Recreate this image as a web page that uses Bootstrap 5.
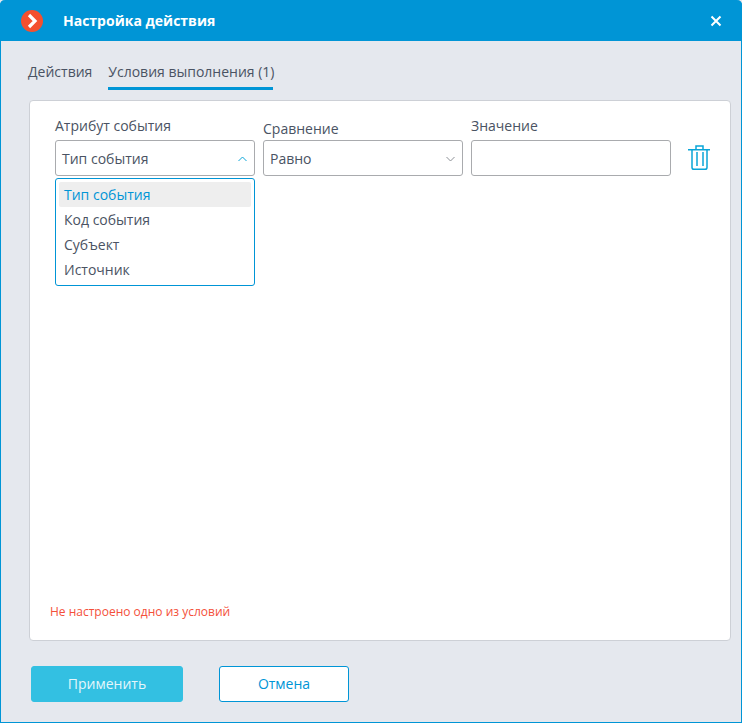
<!DOCTYPE html>
<html lang="ru"><head><meta charset="utf-8"><title>Настройка действия</title>
<link href="https://cdn.jsdelivr.net/npm/bootstrap@5.3.0/dist/css/bootstrap.min.css" rel="stylesheet">
<style>
html,body{margin:0;height:723px;overflow:hidden;background:#e5e8ee}
body{font-family:"Open Sans","Noto Sans",sans-serif;font-size:14px;color:#4a5363}
.win{width:742px;height:723px;background:#e5e8ee;border:1px solid #0095d6;border-top:0;border-radius:5px 5px 0 0}
.win-head{height:41px;margin:0 -1px;background:#0095d6;color:#fff;border-radius:5px 5px 0 0;padding:0 20px 0 21px}
.win-title{font-size:14px;font-weight:700;margin-left:20px}
.x-btn{width:12px;height:12px;margin-right:0}
.tabbar{margin:21px 0 0 27px;height:28px;gap:16px}
.tabitem{height:28px;line-height:19px;color:#4a5363;text-decoration:none}
.tabon{border-bottom:3px solid #0095d6;width:165px;white-space:nowrap}
.panel{margin:10px 0 0 28px;width:702px;height:541px;background:#fff;border:1px solid #cdd0d6;border-radius:4px;position:relative;padding:15px 25px 0}
.fld{width:200px;flex:none}
.fld-label{height:24px;line-height:19px;color:#4a5363}
.fld-low{padding-top:3px}
.selbox{height:36px;border:1px solid #a9abae;border-radius:3px;padding:2px 7px 0 6px;background:#fff;line-height:32px;color:#4a5363}
.fldgap{gap:8px}
.listpop{position:absolute;left:25px;top:77px;width:200px;height:108px;border:1px solid #0095d6;border-radius:3px;background:#fff;padding:3px;z-index:2}
.listitem{height:25px;line-height:25px;padding-left:5px;color:#4a5363}
.listsel{background:#eeeeee;border-radius:2px;color:#0095d6}
.trash{margin:29px 0 0 9px;width:22px;height:26px;flex:none}
.errmsg{position:absolute;left:20px;top:502px;font-size:12px;line-height:18px;color:#f4503a}
.footbar{margin:25px 0 0 30px;gap:36px}
.btn-ok,.btn-no{height:36px;font-size:14px;padding:0 0 2px;border-radius:3px;font-family:inherit}
.btn-ok{width:152px;background:#33c0e2;border:1px solid #33c0e2;color:#e4f6fb}
.btn-no{width:130px;background:#fff;border:1px solid #0095d6;color:#0095d6}
</style></head><body>
<div class="win">
  <div class="win-head d-flex align-items-center">
    <svg width="22" height="22" viewBox="0 0 22 22"><circle cx="11" cy="11" r="11" fill="#f4502f"/><path d="M8 5 14 11 8 17" fill="none" stroke="#fff" stroke-width="3.2"/></svg>
    <div class="win-title flex-grow-1">Настройка действия</div>
    <svg class="x-btn" viewBox="0 0 12 12"><path d="M1.5 1.5 10.5 10.5M10.5 1.5 1.5 10.5" stroke="#fff" stroke-width="2"/></svg>
  </div>
  <div class="tabbar d-flex">
    <a class="tabitem" href="#">Действия</a>
    <a class="tabitem tabon" href="#">Условия выполнения (1)</a>
  </div>
  <div class="panel">
    <div class="d-flex fldgap">
      <div class="fld">
        <div class="fld-label">Атрибут события</div>
        <div class="selbox d-flex justify-content-between align-items-center">Тип события
          <svg width="9" height="6" viewBox="0 0 9 6"><path d="M.5 5 4.5 1 8.5 5" fill="none" stroke="#0aa5d8" stroke-width="1"/></svg></div>
      </div>
      <div class="fld">
        <div class="fld-label fld-low">Сравнение</div>
        <div class="selbox d-flex justify-content-between align-items-center">Равно
          <svg width="9" height="6" viewBox="0 0 9 6"><path d="M.5 1 4.5 5 8.5 1" fill="none" stroke="#8c9096" stroke-width="1"/></svg></div>
      </div>
      <div class="fld">
        <div class="fld-label">Значение</div>
        <div class="selbox"></div>
      </div>
      <svg class="trash" viewBox="0 0 22 26" fill="none" stroke="#0aa5d8" stroke-width="1.5"><path d="M0 4.7H22M8 4.7V1H15V4.7M4 4.7V22.5Q4 24.3 6 24.3H17Q19 24.3 19 22.5V4.7M9 7V21M15 7V21"/></svg>
    </div>
    <div class="listpop">
      <div class="listitem listsel">Тип события</div>
      <div class="listitem">Код события</div>
      <div class="listitem">Субъект</div>
      <div class="listitem">Источник</div>
    </div>
    <div class="errmsg">Не настроено одно из условий</div>
  </div>
  <div class="footbar d-flex">
    <button class="btn btn-ok" type="button">Применить</button>
    <button class="btn btn-no" type="button">Отмена</button>
  </div>
</div>
</body></html>
